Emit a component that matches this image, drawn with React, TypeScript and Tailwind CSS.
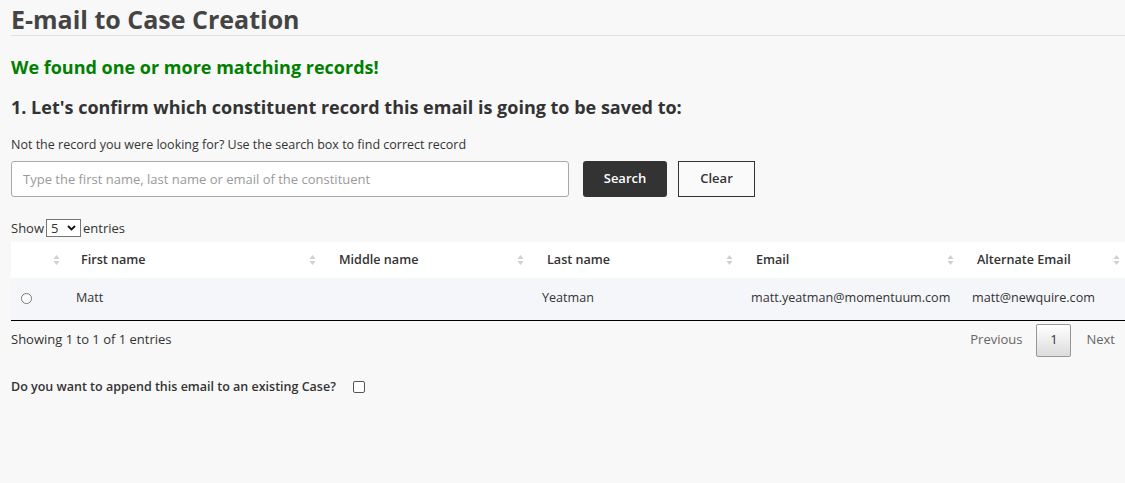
import React from "react";

function SortIcon() {
  return (
    <svg width="7" height="12" viewBox="0 0 7 12" className="shrink-0">
      <path d="M3.5 1 L6.5 5 L0.5 5 Z" fill="#d0d0d0" />
      <path d="M0.5 7 L6.5 7 L3.5 11 Z" fill="#d0d0d0" />
    </svg>
  );
}

function Th({ label, width }: { label: string; width: number }) {
  return (
    <th className="p-0 text-left font-semibold" style={{ width }}>
      <div className="flex items-center justify-between pl-[15px] pr-[8px]">
        <span>{label}</span>
        <SortIcon />
      </div>
    </th>
  );
}

export default function App() {
  return (
    <div
      className="min-h-[483px] w-[1125px] overflow-hidden bg-[#f8f8f8] text-[#333]"
      style={{ fontFamily: '"Open Sans", "Liberation Sans", sans-serif' }}
    >
      <div className="pl-[11px]">
        <h1 className="border-b border-[#e2e2e2] pt-[4px] pb-[1px] text-[25px] leading-[30px] font-bold text-[#444]">
          E-mail to Case Creation
        </h1>
        <h2 className="mt-[17px] text-[18px] leading-[28px] font-bold text-[#008000]">
          We found one or more matching records!
        </h2>
        <h3 className="mt-[12px] text-[18px] leading-[28px] font-bold text-[#333]">
          1. Let's confirm which constituent record this email is going to be saved to:
        </h3>
        <p className="mt-[15px] text-[12.5px] leading-[18px]">
          Not the record you were looking for? Use the search box to find correct record
        </p>
        <div className="mt-[7px] flex items-center">
          <input
            className="h-[36px] w-[558px] rounded-[3px] border border-[#a9a9a9] bg-white px-[11px] text-[13px] text-[#333] placeholder:text-[#9a9a9a] outline-none"
            placeholder="Type the first name, last name or email of the constituent"
          />
          <button className="ml-[14px] h-[36px] w-[84px] rounded-[3px] bg-[#333] text-[13px] font-semibold text-white">
            Search
          </button>
          <button className="ml-[11px] h-[36px] w-[77px] border border-[#333] bg-[#fafafa] text-[13px] font-semibold text-[#333]">
            Clear
          </button>
        </div>
        <div className="mt-[22px] flex items-center text-[13px] leading-[18px]">
          <span>Show</span>
          <div className="mx-[2px] flex h-[18px] w-[35px] items-center justify-between border border-[#767676] bg-white px-[4px] text-[13px]">
            <span>5</span>
            <svg width="9" height="6" viewBox="0 0 9 6">
              <path d="M1 1 L4.5 4.5 L8 1" stroke="#111" strokeWidth="1.8" fill="none" />
            </svg>
          </div>
          <span>entries</span>
        </div>
        <table className="mt-[5px] table-fixed border-collapse text-[12.6px]" style={{ width: 1117 }}>
          <thead>
            <tr className="h-[36px] bg-white">
              <th className="p-0" style={{ width: 55 }}>
                <div className="flex justify-end pr-[6px]">
                  <SortIcon />
                </div>
              </th>
              <Th label="First name" width={258} />
              <Th label="Middle name" width={208} />
              <Th label="Last name" width={209} />
              <Th label="Email" width={221} />
              <Th label="Alternate Email" width={166} />
            </tr>
          </thead>
          <tbody>
            <tr className="h-[42px] border-b border-black bg-[#f5f6fa]">
              <td className="p-0">
                <div className="flex pl-[10px]">
                  <span className="h-[11px] w-[11px] rounded-full border border-[#777] bg-white" />
                </div>
              </td>
              <td className="px-[10px]">Matt</td>
              <td className="px-[10px]"></td>
              <td className="px-[10px]">Yeatman</td>
              <td className="px-[10px] whitespace-nowrap">matt.yeatman@momentuum.com</td>
              <td className="px-[10px] whitespace-nowrap">matt@newquire.com</td>
            </tr>
          </tbody>
        </table>
        <div className="flex items-start justify-between text-[13px]">
          <div className="mt-[9px] leading-[18px]">Showing 1 to 1 of 1 entries</div>
          <div className="mt-[3px] mr-[10px] flex items-center">
            <span className="px-[14px] text-[#666]">Previous</span>
            <span className="flex h-[33px] w-[35px] items-center justify-center rounded-[2px] border border-[#979797] bg-gradient-to-b from-white to-[#dcdcdc] text-[#333]">
              1
            </span>
            <span className="pl-[15px] text-[#666]">Next</span>
          </div>
        </div>
        <div className="mt-[21px] flex items-center text-[12.5px] font-semibold leading-[18px]">
          <span>Do you want to append this email to an existing Case?</span>
          <span className="ml-[17px] h-[12px] w-[12px] rounded-[2px] border border-[#555] bg-white" />
        </div>
      </div>
    </div>
  );
}
